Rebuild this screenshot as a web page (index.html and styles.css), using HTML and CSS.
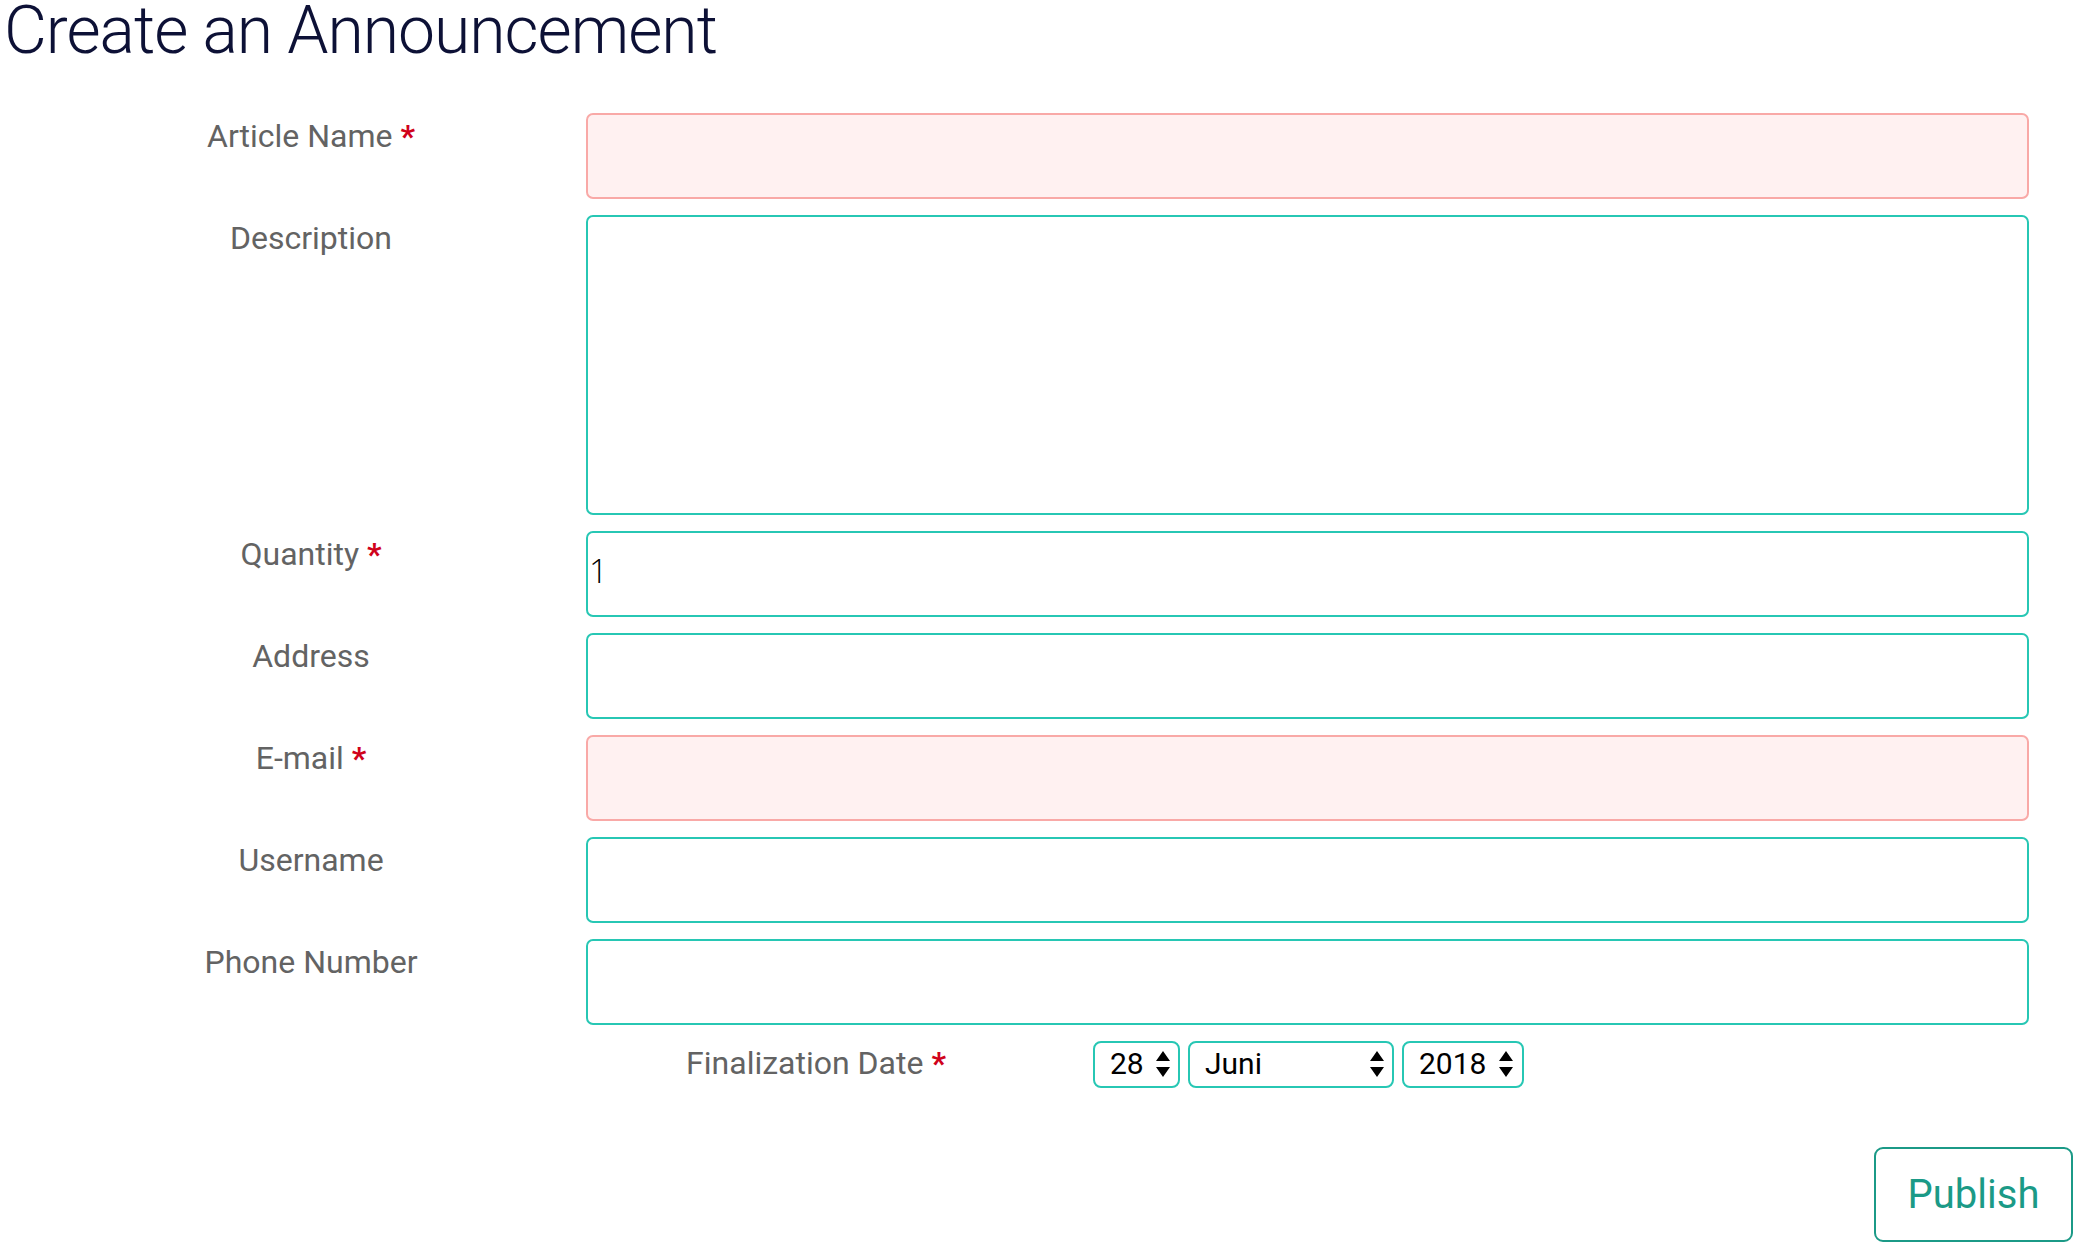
FILE: index.html
```html
<!DOCTYPE html>
<html lang="en">
<head>
<meta charset="utf-8">
<title>Create an Announcement</title>
<link rel="stylesheet" href="styles.css">
</head>
<body>
<h1 class="page-title">Create an Announcement</h1>
<form class="announce-form">
  <div class="form-grid">
    <label class="field-label">Article Name <span class="req">*</span></label>
    <input class="field field--invalid" type="text">

    <label class="field-label">Description</label>
    <textarea class="field field--area"></textarea>

    <label class="field-label">Quantity <span class="req">*</span></label>
    <input class="field field--qty" type="text" value="1">

    <label class="field-label">Address</label>
    <input class="field" type="text">

    <label class="field-label">E-mail <span class="req">*</span></label>
    <input class="field field--invalid" type="text">

    <label class="field-label">Username</label>
    <input class="field" type="text">

    <label class="field-label">Phone Number</label>
    <input class="field" type="text">

    <div class="date-row">
      <span class="date-label">Finalization Date <span class="req">*</span></span>
      <div class="date-selects">
        <div class="pick pick--day"><span class="pick-value">28</span><svg class="pick-arrows" width="14" height="26" viewBox="0 0 14 26"><path d="M0 10 L7 0 L14 10 Z M0 16 L14 16 L7 26 Z" fill="#000"/></svg></div>
        <div class="pick pick--month"><span class="pick-value">Juni</span><svg class="pick-arrows" width="14" height="26" viewBox="0 0 14 26"><path d="M0 10 L7 0 L14 10 Z M0 16 L14 16 L7 26 Z" fill="#000"/></svg></div>
        <div class="pick pick--year"><span class="pick-value">2018</span><svg class="pick-arrows" width="14" height="26" viewBox="0 0 14 26"><path d="M0 10 L7 0 L14 10 Z M0 16 L14 16 L7 26 Z" fill="#000"/></svg></div>
      </div>
    </div>
  </div>
  <div class="actions">
    <button class="btn-publish" type="button">Publish</button>
  </div>
</form>
</body>
</html>
```

FILE: styles.css
```css
html, body {
  margin: 0;
  padding: 0;
  background: #ffffff;
}

body {
  font-family: Roboto, "Liberation Sans", sans-serif;
  width: 2080px;
  overflow: hidden;
}

.page-title {
  margin: 0;
  font-family: Roboto, "Liberation Sans", sans-serif;
  font-weight: 300;
  font-size: 66px;
  letter-spacing: -1px;
  line-height: 62px;
  color: #0d1136;
  padding-left: 4px;
}

.announce-form {
  margin: 0;
}

.form-grid {
  margin-top: 51px;
  display: grid;
  grid-template-columns: 586px 1443px;
  row-gap: 16px;
}

.field-label {
  padding-left: 36px;
  padding-top: 4px;
  text-align: center;
  font-size: 32px;
  color: #636363;
}

.req {
  color: #d0021b;
  font-weight: 700;
}

.field {
  box-sizing: border-box;
  width: 1443px;
  height: 86px;
  margin: 0;
  border: 2px solid #27c7b4;
  border-radius: 7px;
  background: #ffffff;
  padding: 0 0 0 1px;
  font-family: "Open Sans", sans-serif;
  font-weight: 300;
  font-size: 33px;
  color: #000;
  outline: none;
}

.field--invalid {
  border-color: #f9a9a7;
  background: #fff1f1;
}

.field--area {
  height: 300px;
  resize: none;
  display: block;
}

.field--qty {
  padding-bottom: 7px;
}

.date-row {
  grid-column: 2;
  display: flex;
  align-items: center;
  height: 47px;
}

.date-label {
  width: 460px;
  text-align: center;
  font-size: 32px;
  color: #636363;
  padding-bottom: 3px;
}

.date-selects {
  margin-left: 47px;
  display: flex;
  gap: 8px;
}

.pick {
  box-sizing: border-box;
  height: 47px;
  border: 2px solid #27c7b4;
  border-radius: 8px;
  display: flex;
  align-items: center;
  justify-content: space-between;
  padding: 0 8px 2px 15px;
  font-size: 30px;
  color: #000;
}

.pick--day { width: 87px; }
.pick--month { width: 206px; }
.pick--year { width: 122px; padding-right: 9px; }

.pick-arrows {
  display: block;
  flex: none;
}

.actions {
  display: flex;
  justify-content: flex-end;
  padding-right: 7px;
  margin-top: 59px;
}

.btn-publish {
  box-sizing: border-box;
  width: 199px;
  height: 95px;
  border: 2px solid #1b9a87;
  border-radius: 9px;
  background: #ffffff;
  color: #1b9a87;
  font-family: Roboto, "Liberation Sans", sans-serif;
  font-size: 40px;
  font-weight: 400;
  padding: 0;
  cursor: pointer;
}
```
